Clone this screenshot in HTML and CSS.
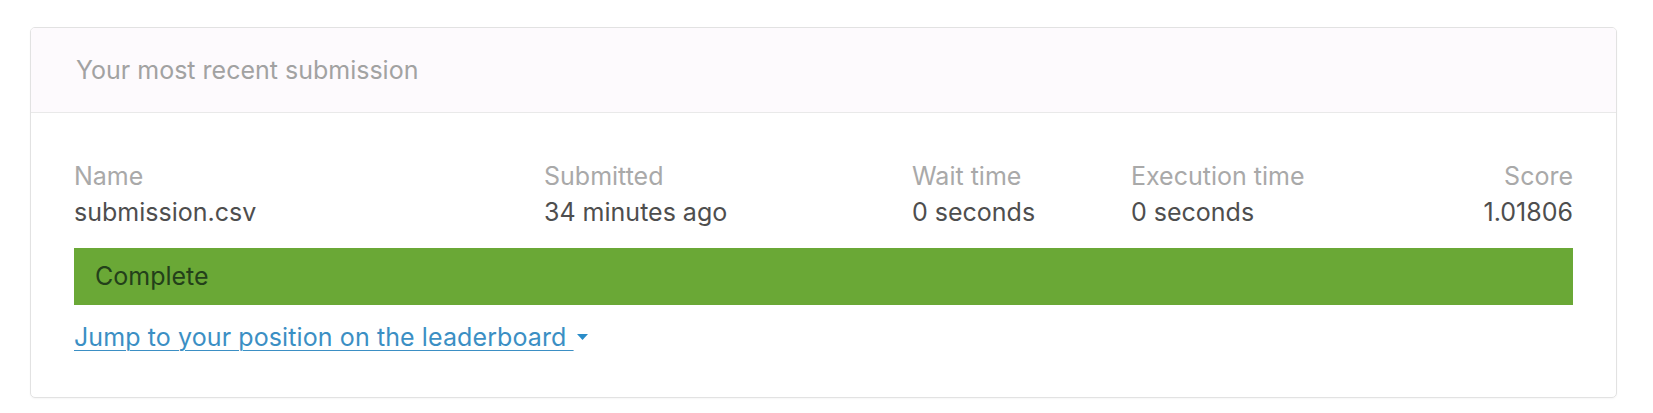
FILE: index.html
```html
<!DOCTYPE html>
<html lang="en">
<head>
<meta charset="utf-8">
<title>Your most recent submission</title>
<link rel="stylesheet" href="styles.css">
</head>
<body>
<section class="card">
  <header class="card-header">Your most recent submission</header>
  <div class="card-body">
    <div class="stats">
      <div class="stat">
        <div class="label">Name</div>
        <div class="value">submission.csv</div>
      </div>
      <div class="stat">
        <div class="label">Submitted</div>
        <div class="value">34 minutes ago</div>
      </div>
      <div class="stat">
        <div class="label">Wait time</div>
        <div class="value">0 seconds</div>
      </div>
      <div class="stat">
        <div class="label">Execution time</div>
        <div class="value">0 seconds</div>
      </div>
      <div class="stat stat-right">
        <div class="label">Score</div>
        <div class="value">1.01806</div>
      </div>
    </div>
    <div class="status">Complete</div>
    <div class="jump"><a href="#" class="jump-link">Jump to your position on the leaderboard </a><svg class="caret" width="11" height="6" viewBox="0 0 11 6"><path d="M0 0H11L5.5 6Z" fill="#2a8cc8"/></svg></div>
  </div>
</section>
</body>
</html>
```

FILE: styles.css
```css
html, body {
  margin: 0;
  padding: 0;
  background: #ffffff;
}

body {
  padding: 27px 36px 15px 30px;
  font-family: Inter, "Noto Sans", sans-serif;
  font-size: 25px;
  line-height: 35px;
}

.card {
  border: 1px solid #e2e2e2;
  border-radius: 5px;
  overflow: hidden;
  box-shadow: 0 1px 2px rgba(0, 0, 0, 0.04);
}

.card-header {
  height: 84px;
  display: flex;
  align-items: center;
  padding: 0 44px 0 45px;
  background: #fdfafd;
  border-bottom: 1px solid #e9e9e9;
  color: #a2a2a2;
  font-size: 25px;
}

.card-body {
  padding: 45px 43px 42px 43px;
}

.stats {
  display: grid;
  grid-template-columns: 470px 368px 219px 1fr auto;
  line-height: 36px;
}

.stat-right {
  text-align: right;
}

.label {
  color: #a9a9a9;
}

.value {
  color: #4e4e4e;
}

.status {
  margin-top: 18px;
  height: 57px;
  display: flex;
  align-items: center;
  padding-left: 21px;
  background: #6aa836;
  color: #23401a;
}

.jump {
  margin-top: 15px;
  display: flex;
  align-items: center;
}

.jump-link {
  color: #3b8fc4;
  text-decoration: underline;
  text-underline-offset: 4px;
  text-decoration-thickness: 1px;
  letter-spacing: 0.1px;
  white-space: pre;
}

.caret {
  margin-left: 3px;
  margin-top: -2px;
}
```
